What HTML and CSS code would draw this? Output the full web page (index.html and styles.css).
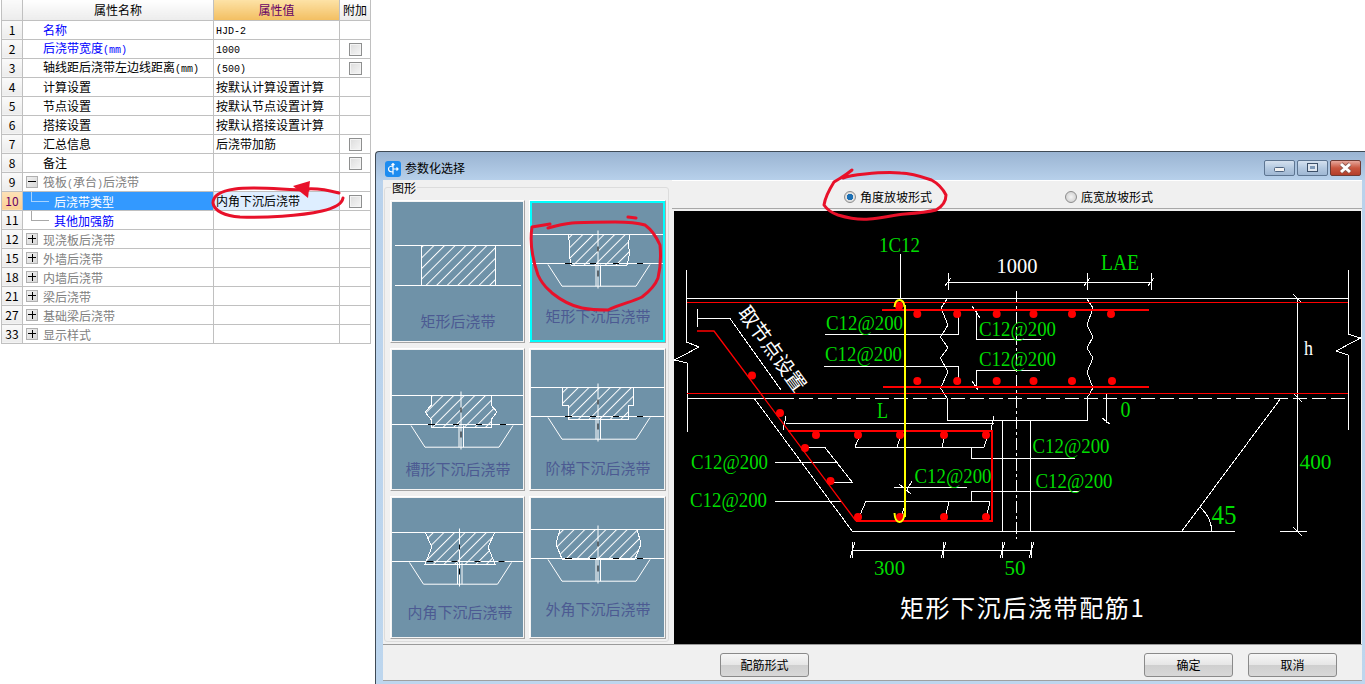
FILE: index.html
```html
<!DOCTYPE html>
<html lang="zh">
<head>
<meta charset="utf-8">
<title>参数化选择</title>
<link rel="stylesheet" href="styles.css">
</head>
<body>
<table class="props">
<colgroup><col class="c0"><col class="c1"><col class="c2"><col class="c3"></colgroup>
<thead><tr><th class="rh"></th><th>属性名称</th><th class="valh">属性值</th><th>附加</th></tr></thead>
<tbody>
<tr><td class="rh">1</td><td class="nm blue">名称</td><td class="val"><span class="lat">HJD-2</span></td><td></td></tr>
<tr><td class="rh">2</td><td class="nm blue">后浇带宽度<span class="lat">(mm)</span></td><td class="val"><span class="lat">1000</span></td><td class="ck"><span class="cb"></span></td></tr>
<tr><td class="rh">3</td><td class="nm">轴线距后浇带左边线距离<span class="lat">(mm)</span></td><td class="val"><span class="lat">(500)</span></td><td class="ck"><span class="cb"></span></td></tr>
<tr><td class="rh">4</td><td class="nm">计算设置</td><td class="val">按默认计算设置计算</td><td></td></tr>
<tr><td class="rh">5</td><td class="nm">节点设置</td><td class="val">按默认节点设置计算</td><td></td></tr>
<tr><td class="rh">6</td><td class="nm">搭接设置</td><td class="val">按默认搭接设置计算</td><td></td></tr>
<tr><td class="rh">7</td><td class="nm">汇总信息</td><td class="val">后浇带加筋</td><td class="ck"><span class="cb"></span></td></tr>
<tr><td class="rh">8</td><td class="nm">备注</td><td class="val"></td><td class="ck"><span class="cb"></span></td></tr>
<tr><td class="rh">9</td><td><div class="tree grey"><span class="exp minus"></span><span class="lbl">筏板<span class="lat">(</span>承台<span class="lat">)</span>后浇带</span></div></td><td></td><td></td></tr>
<tr class="sel"><td class="rh">10</td><td><div class="tree"><span class="twig"></span><span class="leaf">后浇带类型</span></div></td><td class="val">内角下沉后浇带</td><td class="ck"><span class="cb"></span></td></tr>
<tr><td class="rh">11</td><td><div class="tree blue"><span class="twig"></span><span class="leaf">其他加强筋</span></div></td><td></td><td></td></tr>
<tr><td class="rh">12</td><td><div class="tree grey"><span class="exp"></span><span class="lbl">现浇板后浇带</span></div></td><td></td><td></td></tr>
<tr><td class="rh">15</td><td><div class="tree grey"><span class="exp"></span><span class="lbl">外墙后浇带</span></div></td><td></td><td></td></tr>
<tr><td class="rh">18</td><td><div class="tree grey"><span class="exp"></span><span class="lbl">内墙后浇带</span></div></td><td></td><td></td></tr>
<tr><td class="rh">21</td><td><div class="tree grey"><span class="exp"></span><span class="lbl">梁后浇带</span></div></td><td></td><td></td></tr>
<tr><td class="rh">27</td><td><div class="tree grey"><span class="exp"></span><span class="lbl">基础梁后浇带</span></div></td><td></td><td></td></tr>
<tr><td class="rh">33</td><td><div class="tree grey"><span class="exp"></span><span class="lbl">显示样式</span></div></td><td></td><td></td></tr>
</tbody>
</table>

<section class="dialog">
  <header class="titlebar">
    <svg class="appicon" viewBox="0 0 16 16"><rect width="16" height="16" rx="3" fill="#1c8cf0"/><path d="M8 2.500V13.500M8 5C4.500 5 3.500 7 3.500 8S4.500 11 8 11M8 8H13M11.500 6.500 13 8 11.500 9.500M6.500 4 8 2.500 9.500 4" fill="none" stroke="#fff" stroke-width="1.200"/></svg>
    <span class="wintitle">参数化选择</span>
    <div class="winbtns">
      <span class="wb"><svg viewBox="0 0 31 16"><rect x="10.500" y="7.500" width="10" height="4" rx="1" fill="#f2f2f2" stroke="#4e6480"/></svg></span>
      <span class="wb"><svg viewBox="0 0 31 16"><rect x="10.500" y="3.500" width="10" height="8" fill="#dfe7f0" stroke="#3c5069"/><rect x="13" y="6" width="5" height="3" fill="#7f9ab8"/></svg></span>
      <span class="wb close"><svg viewBox="0 0 31 16"><path d="M11 4l9 8M20 4l-9 8" stroke="#8c5a52" stroke-width="4.500"/><path d="M11 4l9 8M20 4l-9 8" stroke="#fff" stroke-width="3"/></svg></span>
    </div>
  </header>
  <div class="client">
    <div class="main">
      <div class="leftcol">
        <div class="group">
          <div class="legend">图形</div>
          <svg class="defs" width="0" height="0"><defs>
            <pattern id="hatch" width="7.500" height="7.500" patternUnits="userSpaceOnUse" patternTransform="rotate(-45)"><rect width="7.500" height="1" fill="#fff"/></pattern>
            <g id="foot" fill="none" stroke="#fff" stroke-width="1">
              <path d="M-140-29H140M-140 0H140M-50 1-36 22.700H38L52 1M-2 1V22.700M2.500 1V22.700M0-33V25"/>
              <path d="M-33 0h7M-8 0h6M15 0h6M39 0h6M0-17v5M0 7v6" stroke="#000"/>
            </g>
          </defs></svg>
          <div class="thumbs">
            <figure class="card"><svg viewBox="392 202 131 139">
              <path d="M395 245.500H521M395 285.500H521" stroke="#fff" fill="none"/>
              <rect x="421.500" y="245.500" width="74" height="40" fill="url(#hatch)" stroke="#fff"/>
              <text class="tl" x="458" y="327">矩形后浇带</text></svg></figure>
            <figure class="card on"><svg viewBox="530 201 135 141">
              <path d="M568 234H630L628 246 630 252 627 265H571L569 252 570 246Z" fill="url(#hatch)" stroke="#fff"/>
              <use href="#foot" x="598" y="263.500"/>
              <text class="tl" x="598" y="322">矩形下沉后浇带</text></svg></figure>
            <figure class="card"><svg viewBox="392 350 131 139">
              <path d="M431.500 395H491V405L497 412 491 420V427H431.500V420L425 412 431.500 405Z" fill="url(#hatch)" stroke="#fff"/>
              <use href="#foot" x="461" y="424.500"/>
              <text class="tl" x="458" y="475">槽形下沉后浇带</text></svg></figure>
            <figure class="card"><svg viewBox="531 350 133 139">
              <path d="M562 387H633V405H628V419H568V405H562Z" fill="url(#hatch)" stroke="#fff"/>
              <use href="#foot" x="598" y="416.500"/>
              <text class="tl" x="598" y="474">阶梯下沉后浇带</text></svg></figure>
            <figure class="card"><svg viewBox="392 498 131 139">
              <path d="M425 532H495L488 547 495 564H425L432 547Z" fill="url(#hatch)" stroke="#fff"/>
              <use href="#foot" x="459.500" y="561.500"/>
              <text class="tl" x="460" y="618">内角下沉后浇带</text></svg></figure>
            <figure class="card"><svg viewBox="531 498 133 139">
              <path d="M560 529H637L641 544 635 559H562L556 544Z" fill="url(#hatch)" stroke="#fff"/>
              <use href="#foot" x="598" y="558.500"/>
              <text class="tl" x="598" y="615">外角下沉后浇带</text></svg></figure>
          </div>
        </div>
      </div>
      <div class="rightcol">
        <div class="radios">
          <label class="radio r1"><span class="dot checked"></span>角度放坡形式</label>
          <label class="radio r2"><span class="dot"></span>底宽放坡形式</label>
        </div>
        <svg class="drawing" viewBox="674 211 687 433">
          <g class="ln" fill="none" stroke="#fff" stroke-width="1">
            <path d="M686.500 270V342L699 347 674.500 360 687 363V432"/>
            <path d="M1348 270V334L1360.500 338 1336 351 1348 355V430"/>
            <path d="M687 298.500H1348M687 398.500H780"/>
            <path d="M780 398.500H1348" stroke-dasharray="14 5"/>
            <path d="M947 299 941 308 948 325 940.500 337 948 348 940.500 358 948 372 940.500 388 947 398V420.500H1087V398L1093 388 1087 372 1093 358 1087 348 1093 337 1087 325 1093 308 1087 299"/>
            <path d="M900.500 254V298"/>
            <path d="M948 282.500H1151M948 273V290M1087 273V290M1151 273V290M945 286 951 278M1084 286 1090 278M1148 286 1154 278"/>
            <path d="M1016.500 291V539" stroke-dasharray="12 3 3 3"/>
            <path d="M825 334.500H958.500V314M824 366.500H958.500V381M1041 339.500H976.500V310M972 306 980 318M1040 370.500H976.500V387M972 381 978 390"/>
            <path d="M697 309V327M697 318.500H730L781 390"/>
            <path d="M754 398 852.500 531.500H1235"/>
            <path d="M786 423.500H994M786 416 783 430M994 416 991 430"/>
            <path d="M1002.500 420V531M1030.500 420V531"/>
            <path d="M1106.500 393V423M1102 418 1110 424"/>
            <path d="M855 447.500H984M860 435 855 447M901 435 897 447M945 435 942 447M988 435 984 447"/>
            <path d="M971.500 447V458.500H1075"/>
            <path d="M866 501.500H990M866 501 860 515M949 501 946 515M990 501 987 515M906 501 902 515"/>
            <path d="M971.500 501V491.500H1079"/>
            <path d="M894 487.500H967M899 484 911 494M907 490 912 481"/>
            <path d="M775 462.500H837.500M775 501.500H840.500"/>
            <path d="M805 447.500H825L852.500 482.500H830.500"/>
            <path d="M852.500 550.500H1031M852.500 542V558M943 542V558M1002.500 542V558M1031 542V558M850 558 855 542M941 558 946 542M1000 558 1005 542M1029 558 1034 542"/>
            <path d="M1182 531 1281 398M1200 507Q1212 518 1211.500 531"/>
            <path d="M1297.500 298V531M1280 531.500H1307M1293 527 1302 536M1293 294 1302 303M1293 393 1302 402"/>
          </g>
          <path class="ln" d="M687 302.500H1348M687 393.500H1348" stroke="#f00" stroke-width="1" fill="none"/>
          <path d="M697 331H714L856 521" stroke="#f00" stroke-width="1.300" fill="none"/>
          <path class="ln" d="M882 310H1149M883 387H1149M787.500 431H992V521H856" stroke="#f00" stroke-width="2" fill="none"/>
          <g fill="#f00">
            <circle cx="917.300" cy="314" r="4"/><circle cx="957.200" cy="314" r="4"/><circle cx="996.700" cy="314" r="4"/><circle cx="1033.500" cy="314" r="4"/><circle cx="1072" cy="314" r="4"/><circle cx="1111" cy="314" r="4"/>
            <circle cx="917.300" cy="381" r="4"/><circle cx="957.200" cy="381" r="4"/><circle cx="996.700" cy="381" r="4"/><circle cx="1033.500" cy="381" r="4"/><circle cx="1072" cy="381" r="4"/><circle cx="1112" cy="381" r="4"/>
            <circle cx="816" cy="435" r="4"/><circle cx="858" cy="435" r="4"/><circle cx="900" cy="435" r="4"/><circle cx="944" cy="435" r="4"/><circle cx="986" cy="435" r="4"/>
            <circle cx="858" cy="517" r="4"/><circle cx="900" cy="517" r="4"/><circle cx="944" cy="517" r="4"/><circle cx="986" cy="517" r="4"/>
            <circle cx="752" cy="375.500" r="4"/><circle cx="780" cy="413" r="4"/><circle cx="805" cy="448" r="4"/><circle cx="830.500" cy="481" r="4"/>
            <circle cx="899" cy="306" r="4"/>
          </g>
          <g fill="none" stroke="#ff0" stroke-width="2">
            <path class="ln" d="M904.500 305V517"/>
            <path d="M894.500 307Q895 300 899.500 300T904.500 307M894.500 513Q895 522 899.500 522T904.500 513"/>
          </g>
          <g class="gr">
            <text x="879" y="251.500" textLength="41" lengthAdjust="spacingAndGlyphs">1C12</text>
            <text x="826" y="330" textLength="77" lengthAdjust="spacingAndGlyphs">C12@200</text>
            <text x="825" y="361" textLength="77" lengthAdjust="spacingAndGlyphs">C12@200</text>
            <text x="979" y="336" textLength="77" lengthAdjust="spacingAndGlyphs">C12@200</text>
            <text x="979" y="366" textLength="77" lengthAdjust="spacingAndGlyphs">C12@200</text>
            <text x="1032.500" y="453" textLength="77" lengthAdjust="spacingAndGlyphs">C12@200</text>
            <text x="1035.500" y="488" textLength="77" lengthAdjust="spacingAndGlyphs">C12@200</text>
            <text x="914.500" y="483" textLength="77" lengthAdjust="spacingAndGlyphs">C12@200</text>
            <text x="691" y="469" textLength="77" lengthAdjust="spacingAndGlyphs">C12@200</text>
            <text x="690" y="507" textLength="77" lengthAdjust="spacingAndGlyphs">C12@200</text>
            <text x="874" y="575" textLength="31" lengthAdjust="spacingAndGlyphs">300</text>
            <text x="1004.500" y="575" textLength="21" lengthAdjust="spacingAndGlyphs">50</text>
            <text x="1299.500" y="469" textLength="32" lengthAdjust="spacingAndGlyphs">400</text>
            <text class="big" x="1101" y="270" textLength="38" lengthAdjust="spacingAndGlyphs">LAE</text>
            <text class="big" x="877" y="418" textLength="11" lengthAdjust="spacingAndGlyphs">L</text>
            <text class="big" x="1120.500" y="417" textLength="10" lengthAdjust="spacingAndGlyphs">0</text>
            <text class="huge" x="1211.500" y="524" textLength="25" lengthAdjust="spacingAndGlyphs">45</text>
          </g>
          <text class="wh" x="996.500" y="273" textLength="41" lengthAdjust="spacingAndGlyphs">1000</text>
          <text class="wh" x="1304" y="355" textLength="9" lengthAdjust="spacingAndGlyphs">h</text>
          <text class="rot" x="772" y="356" transform="rotate(54 772 349)">取节点设置</text>
          <text class="cap" x="900" y="617">矩形下沉后浇带配筋1</text>
        </svg>
      </div>
    </div>
    <footer class="footer">
      <button class="btn" type="button">配筋形式</button>
      <button class="btn push" type="button">确定</button>
      <button class="btn" type="button">取消</button>
    </footer>
  </div>
</section>

<svg class="marks" viewBox="0 0 1365 684">
  <g fill="none" stroke="#e8112a" stroke-width="3" stroke-linecap="round" stroke-linejoin="round">
    <path d="M308 190C285 190 255 186 235 189 220 191 213 196 213 203 214 211 225 216 240 217 265 218 300 216 322 211 335 208 342 204 343 198"/>
    <path d="M305 189C315 188 328 190 339 193"/>
    <path d="M532 227C530 240 532 258 538 275 543 286 547 288 552 293 562 301 572 306 582 308 592 310 602 310 608 310 620 304 632 302 642 297 650 291 655 286 658 278 661 266 661 256 660 245 656 236 652 230 645 225 635 222 625 222 615 222 600 222 585 222 572 223 562 224 555 226 548 228M532 227 550 224M628 217 636 218"/>
    <path d="M852 170C845 176 840 178 834 182 829 190 825 198 824 205 828 211 832 213 838 215 848 218 860 220 869.500 219 880 218 895 215 905 214 918 213 928 212 936 210 943 206 946 200 946 195 942 187 937 183 931.500 180 920 176 910 173 900.500 173 888 172 875 173 865 174 855 175 848 176 843 178"/>
  </g>
  <path d="M293 186 310 181 308 198Z" fill="#e8112a"/>
</svg>
</body>
</html>
```
FILE: styles.css
```css
* { box-sizing: border-box; }
html, body { margin: 0; height: 684px; overflow: hidden; background: #fff; }
body { font: 12px/1 "Noto Sans CJK SC", "Liberation Sans", sans-serif; color: #000; }

.lat { font-family: "Liberation Mono", monospace; font-size: 10px; }

/* property table */
.props { margin-left: 1px; width: 369px; table-layout: fixed; border-collapse: collapse; }
.c0 { width: 21px; } .c1 { width: 191px; } .c2 { width: 126px; } .c3 { width: 31px; }
.props th, .props td { border: 1px solid #c0c0c0; padding: 0; height: 19px; font-weight: 400; white-space: nowrap; overflow: hidden; }
.props th { height: 20px; border-top: 0; text-align: center; background: linear-gradient(#fff, #ececec); font-size: 12px; }
.props th.valh { background: linear-gradient(#fde2a6, #f3bf62); color: #660066; }
.props td.rh { text-align: center; background: linear-gradient(#fafafa, #ececec); }
.props th.rh { background: linear-gradient(#fafafa, #ececec); }
.props td.nm { padding: 1px 0 0 20px; }
.props td.val { padding-left: 2px; }
.props .sel td.val { padding-top: 1px; }
.blue { color: #0000ff; }
.grey { color: #808080; }
.ck { text-align: center; }
.cb { display: block; width: 13px; height: 13px; margin: 1px auto 0; border: 1px solid #8e8f8f; background: linear-gradient(135deg, #dcdcdc, #f6f6f6); box-shadow: inset 0 0 0 1px #f4f4f4; }
.tree { display: flex; align-items: center; height: 18px; padding-left: 3px; }
.lbl { margin-top: 2px; }
.exp { flex: none; width: 12px; height: 12px; margin-right: 5px; border: 1px solid #b0b0b0;
  background:
    linear-gradient(#000, #000) center / 8px 1px no-repeat,
    linear-gradient(#000, #000) center / 1px 8px no-repeat,
    linear-gradient(135deg, #f0f0f0, #d8d8d8); }
.exp.minus { background:
    linear-gradient(#000, #000) center / 8px 1px no-repeat,
    linear-gradient(135deg, #f0f0f0, #d8d8d8); }
.twig { flex: none; align-self: flex-start; width: 18px; height: 10px; margin-left: 5px; border-left: 1px solid #a8a8a8; border-bottom: 1px solid #a8a8a8; }
.leaf { margin: 2px 0 0 5px; }
.sel td:nth-child(2) { background: #3399ff; color: #fff; }
.sel td:nth-child(3) { background: #deeeff; }
.sel td.rh { background: linear-gradient(#fde2b8, #fbcf94); color: #660066; }
.sel .twig { border-color: #a8d4ff; }

/* dialog window */
.dialog { position: absolute; left: 375px; top: 151px; width: 990px; height: 533px; display: flex; flex-direction: column; padding: 0 3px 3px 7px;
  border: 1px solid #3f4a55; border-right: 0; border-bottom: 0; border-radius: 4px 0 0 0;
  background: linear-gradient(#9ab4d2 0, #b9d2ec 30px, #bdd6ee 100%); }
.titlebar { flex: none; height: 28px; display: flex; align-items: center; margin-left: -7px; padding: 5px 0 0 9px; }
.appicon { width: 16px; height: 16px; flex: none; }
.wintitle { margin-left: 4px; margin-top: -1px; }
.winbtns { margin-left: auto; display: flex; gap: 2px; margin-right: 1px; margin-top: -1px; }
.wb { width: 31px; height: 16px; border: 1px solid #5d7591; border-radius: 2px; background: linear-gradient(#d4e1ef, #b4c9e0 50%, #9fb7d3); overflow: hidden; }
.wb svg { display: block; margin: -1px; width: 31px; height: 16px; }
.wb.close { background: linear-gradient(#e7a79b, #c9563f 50%, #b33e2b); border-color: #6e3a33; }
.client { flex: 1; min-height: 0; display: flex; flex-direction: column; background: #f0f0f0; border-bottom: 1px solid #a0a0a0; }
.main { flex: none; height: 465px; display: flex; border-bottom: 1px solid #9a9a9a; }
.leftcol { flex: none; width: 289px; padding: 7px 0 0 1px; }
.group { width: 285px; height: 455px; border: 1px solid #dcdcdc; border-radius: 3px; padding: 0 5px; }
.legend { width: fit-content; margin: -7px 0 0 1px; padding: 0 1px; background: #f0f0f0; height: 13px; line-height: 13px; }
.defs { position: absolute; }
.thumbs { display: grid; grid-template-columns: 135px 137px; grid-template-rows: repeat(3, 143px); column-gap: 4px; row-gap: 5px; margin-top: 6px; }
.card { margin: 0; padding: 1px; background: #f4f4f4; border: 1px solid; border-color: #fff #a4a4a4 #a4a4a4 #fff; }
.card svg { display: block; width: 100%; height: 100%; background: #6f92a8; overflow: hidden; }
.card path, .card rect, .ln, .ln path { shape-rendering: crispEdges; }
.card.on { padding: 0; }
.card.on svg { outline: 2px solid #00ffff; outline-offset: -2px; }
.tl { font-size: 15px; fill: #4c5a92; text-anchor: middle; }
.rightcol { flex: 1; min-width: 0; display: flex; flex-direction: column; }
.radios { flex: none; height: 29px; display: flex; align-items: center; padding-top: 5px; border-top: 1px solid #fff; border-bottom: 1px solid #a8a8a8; }
.radio { display: flex; align-items: center; gap: 4px; }
.r1 { margin-left: 172px; }
.r2 { margin-left: 133px; }
.dot { width: 12px; height: 12px; border-radius: 50%; border: 1px solid #8c8c8c; background: radial-gradient(#f4f4f4, #c8c8c8); }
.dot.checked { background: radial-gradient(#1c6fb4 0 3px, #e4e4e4 3.500px, #cfcfcf); }
.drawing { flex: none; display: block; width: 687px; height: 433px; margin: 2px 0 0 2px; background: #000; }
.gr text { font: 20px "Liberation Serif", serif; fill: #00dc00; }
.gr text.big { font-size: 24px; }
.gr text.huge { font-size: 28px; }
.wh { font: 20px "Liberation Serif", serif; fill: #fff; }
.rot { font-size: 20px; fill: #fff; text-anchor: middle; }
.cap { font-size: 24px; letter-spacing: 1.600px; fill: #fff; }
.footer { flex: 1; display: flex; align-items: flex-start; gap: 15px; padding: 8px 25px 0 337px; }
.btn { width: 89px; height: 24px; padding: 0; font: inherit; color: #000; border: 1px solid #8a8a8a; border-radius: 3px; background: linear-gradient(#f6f6f6, #e6e6e6 50%, #cfcfcf 52%, #d8d8d8); }
.push { margin-left: auto; }

/* hand-drawn annotations */
.marks { position: absolute; left: 0; top: 0; width: 1365px; height: 684px; pointer-events: none; }
```
